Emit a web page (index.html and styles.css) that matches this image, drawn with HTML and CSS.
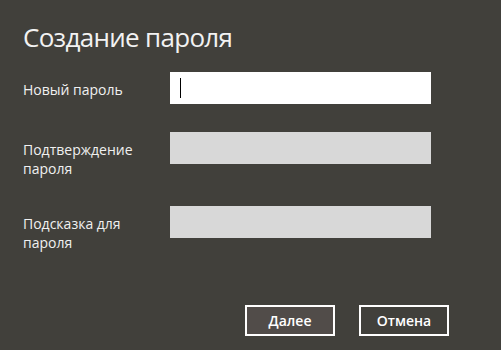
FILE: index.html
```html
<!DOCTYPE html>
<html lang="ru">
<head>
<meta charset="utf-8">
<link rel="stylesheet" href="styles.css">
</head>
<body>
<div class="dialog">
  <h1 class="title">Создание пароля</h1>
  <div class="form">
    <div class="row">
      <label class="label">Новый пароль</label>
      <div class="input active"><span class="caret"></span></div>
    </div>
    <div class="row">
      <label class="label">Подтверждение<br>пароля</label>
      <div class="input"></div>
    </div>
    <div class="row">
      <label class="label">Подсказка для<br>пароля</label>
      <div class="input"></div>
    </div>
  </div>
  <div class="actions">
    <button class="btn primary">Далее</button>
    <button class="btn">Отмена</button>
  </div>
</div>
</body>
</html>
```

FILE: styles.css
```css
html, body {
  margin: 0;
  padding: 0;
  background: #41403b;
}
body {
  width: 501px;
  height: 350px;
  overflow: hidden;
  font-family: "Open Sans", "Noto Sans", sans-serif;
  color: #ffffff;
}
.dialog {
  padding: 20px 0 0 23px;
  display: flex;
  flex-direction: column;
}
.title {
  margin: 0;
  font-weight: 400;
  font-size: 26px;
  line-height: 34px;
  letter-spacing: -0.7px;
  color: #f2f2f2;
}
.form {
  margin-top: 18px;
  display: flex;
  flex-direction: column;
  gap: 28px;
}
.row {
  display: grid;
  grid-template-columns: 147px 261px;
  align-items: start;
}
.label {
  padding-top: 8px;
  font-size: 14px;
  line-height: 19px;
  color: #f0f0f0;
}
.input {
  height: 32px;
  background: #d8d8d8;
  position: relative;
}
.input.active {
  background: #ffffff;
}
.caret {
  position: absolute;
  left: 10px;
  top: 6px;
  width: 1px;
  height: 20px;
  background: #000;
}
.actions {
  margin-top: 53px;
  display: flex;
  gap: 24px;
  padding-left: 222px;
}
.btn {
  width: 90px;
  height: 31px;
  border: 2px solid #ffffff;
  background: transparent;
  color: #ffffff;
  font-family: "Open Sans", "Noto Sans", sans-serif;
  font-weight: 600;
  font-size: 14px;
  padding: 0;
}
.btn.primary {
  background: #514c49;
}
```
